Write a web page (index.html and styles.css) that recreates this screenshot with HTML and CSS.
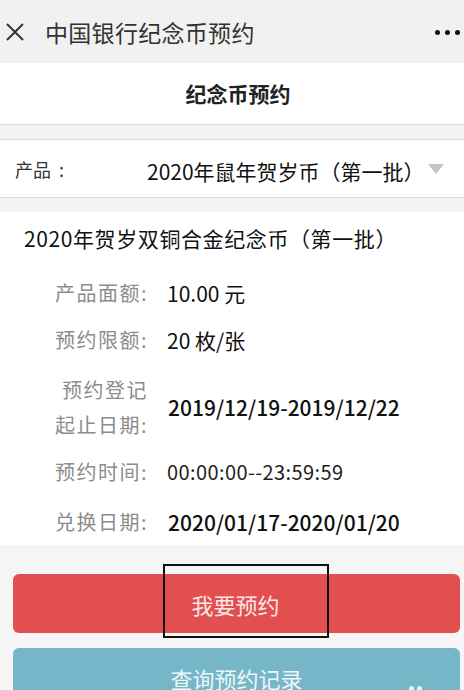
FILE: index.html
```html
<!DOCTYPE html>
<html lang="zh-CN">
<head>
  <meta charset="UTF-8">
  <title>中国银行纪念币预约</title>
  <meta name="viewport" content="width=device-width, initial-scale=1.0" />
  <link rel="stylesheet" href="styles.css">
</head>
<body>

  <div class="topbar">
    <svg class="close-icon" width="20" height="20" viewBox="0 0 20 20">
      <path d="M2 2 L18 18 M18 2 L2 18" stroke="#333" stroke-width="2" fill="none" />
    </svg>
    <span class="topbar-title">中国银行纪念币预约</span>
    <span class="more"><i></i><i></i><i></i></span>
  </div>

  <div class="header">纪念币预约</div>
  <div class="band"></div>

  <div class="select-row">
    <span class="select-label">产品<span class="colon">:</span></span>
    <div class="select-value">
      2020年鼠年贺岁币（第一批）
      <span class="caret"></span>
    </div>
  </div>
  <div class="band band-low"></div>

  <div class="card">
    <h3 class="card-title">2020年贺岁双铜合金纪念币（第一批）</h3>

    <div class="info-row row-face">
      <span class="info-label">产品面额:</span>
      <span class="info-value">10.00 元</span>
    </div>
    <div class="info-row">
      <span class="info-label">预约限额:</span>
      <span class="info-value">20 枚/张</span>
    </div>
    <div class="info-row row-tall">
      <span class="info-label">预约登记<br>起止日期:</span>
      <span class="info-value strong">2019/12/19-2019/12/22</span>
    </div>
    <div class="info-row row-time">
      <span class="info-label">预约时间:</span>
      <span class="info-value thin">00:00:00--23:59:59</span>
    </div>
    <div class="info-row row-swap">
      <span class="info-label">兑换日期:</span>
      <span class="info-value strong">2020/01/17-2020/01/20</span>
    </div>
  </div>

  <div class="actions">
    <div class="button-wrap">
      <button class="button reserve-btn">我要预约</button>
      <div class="mark-box"></div>
    </div>
    <button class="button query-btn">查询预约记录</button>
    <span class="float-dots"><i></i><i></i></span>
  </div>

</body>
</html>
```

FILE: styles.css
```css
* {
  box-sizing: border-box;
}

html, body {
  margin: 0;
  padding: 0;
}

body {
  font-family: "Noto Sans CJK SC", "Noto Sans", sans-serif;
  background-color: #f5f5f5;
  color: #111;
  height: 690px;
  overflow: hidden;
}

/* 顶部导航栏 */
.topbar {
  height: 63px;
  background-color: #f1f1f1;
  display: flex;
  align-items: center;
  padding: 0 4px 0 5px;
}

.close-icon {
  flex: none;
}

.topbar-title {
  margin-left: 20px;
  font-size: 23px;
  color: #333;
  letter-spacing: 0.3px;
  flex: 1;
}

.more {
  display: flex;
  gap: 5px;
  margin-top: 2px;
}

.more i {
  width: 5px;
  height: 5px;
  border-radius: 50%;
  background-color: #111;
}

.header {
  height: 61px;
  background-color: white;
  text-align: center;
  padding-left: 12px;
  font-size: 21px;
  font-weight: bold;
  color: #222;
  line-height: 61px;
}

.band {
  height: 16px;
  background-color: #f4f4f4;
  border-top: 1px solid #dcdcdc;
  border-bottom: 1px solid #dcdcdc;
}

.band-low {
  height: 15px;
  border-bottom: none;
}

/* 产品选择 */
.select-row {
  height: 57px;
  background-color: white;
  display: flex;
  align-items: center;
  padding-left: 15px;
}

.select-label {
  font-size: 18px;
  color: #333;
  width: 132px;
}

.colon {
  margin-left: 8px;
}

.select-value {
  font-size: 21px;
  color: #111;
  display: flex;
  align-items: center;
  margin-top: 4px;
}

.caret {
  width: 0;
  height: 0;
  border-left: 8px solid transparent;
  border-right: 8px solid transparent;
  border-top: 10px solid #c4c4c4;
  margin-left: 3px;
  margin-top: -4px;
}

/* 纪念币信息 */
.card {
  background-color: white;
  padding: 12px 0 8px 24px;
}

.card-title {
  margin: 0;
  font-size: 21px;
  font-weight: normal;
  letter-spacing: 0.6px;
  line-height: 28px;
  color: #111;
}

.info-row {
  display: flex;
  align-items: center;
  margin-top: 17px;
}

.row-face {
  margin-top: 26px;
}

.row-time {
  margin-top: 15px;
}

.row-swap {
  margin-top: 20px;
}

.info-label {
  width: 124px;
  text-align: right;
  font-size: 20px;
  line-height: 30px;
  color: #8c8c8c;
  letter-spacing: 1.5px;
}

.row-tall .info-label {
  line-height: 35px;
}

.info-value {
  margin-left: 19px;
  font-size: 21px;
  line-height: 30px;
  color: #111;
}

.info-value.thin {
  font-size: 20px;
  color: #222;
  letter-spacing: 0.4px;
}

.info-value.strong {
  font-weight: 500;
  font-size: 21px;
  margin-left: 20px;
}

/* 底部按钮 */
.actions {
  position: relative;
  padding: 29px 4px 0 13px;
  display: flex;
  flex-direction: column;
  gap: 15px;
}

.button-wrap {
  position: relative;
}

.button {
  display: block;
  width: 100%;
  height: 59px;
  border: none;
  border-radius: 6px;
  font-family: inherit;
  font-size: 22px;
  color: #fbe6e6;
  cursor: pointer;
}

.reserve-btn {
  background-color: #e14f50;
  padding-left: 4px;
}

.query-btn {
  background-color: #75b6c9;
  color: #eef7fa;
}

.mark-box {
  position: absolute;
  left: 150px;
  top: -10px;
  width: 166px;
  height: 74px;
  border: 2px solid #111;
  pointer-events: none;
}

.float-dots {
  position: absolute;
  left: 409px;
  top: 141px;
  display: flex;
  gap: 3px;
}

.float-dots i {
  width: 5px;
  height: 5px;
  border-radius: 50%;
  background-color: #e8f3f7;
}
```
